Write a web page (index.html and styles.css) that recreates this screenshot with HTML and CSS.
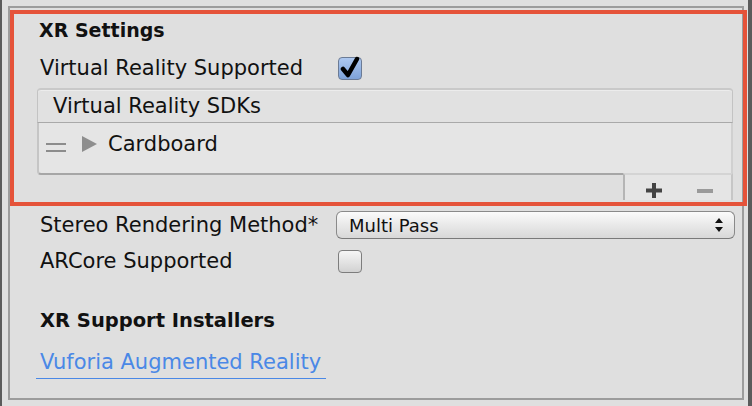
FILE: index.html
```html
<!DOCTYPE html>
<html lang="en">
<head>
    <meta charset="UTF-8">
    <title>Player Settings - XR</title>
    <link rel="stylesheet" href="styles.css">
</head>
<body>
    <div class="frame">
        <div class="panel">
            <section class="xr-box">
                <h2 class="section-title">XR Settings</h2>
                <div class="field">
                    <span class="label">Virtual Reality Supported</span>
                    <span class="check on">
                        <svg width="24" height="24" viewBox="0 0 24 24">
                            <path d="M5 13 L10 19 L19 3" fill="none" stroke="#000" stroke-width="4.5" stroke-linecap="round" stroke-linejoin="round"/>
                        </svg>
                    </span>
                </div>
                <div class="sdk-list">
                    <div class="list-head">Virtual Reality SDKs</div>
                    <div class="list-body">
                        <div class="list-item">
                            <span class="handle"></span>
                            <span class="arrow"></span>
                            <span>Cardboard</span>
                        </div>
                    </div>
                    <div class="list-foot">
                        <span class="btn-plus">
                            <svg width="22" height="24" viewBox="0 0 22 24">
                                <path d="M8 2 V17 M0 9.5 H16" stroke="#444" stroke-width="4"/>
                                <rect x="14" y="19" width="6" height="3" fill="#444"/>
                            </svg>
                        </span>
                        <span class="btn-minus"></span>
                    </div>
                </div>
            </section>

            <div class="field wide">
                <span class="label">Stereo Rendering Method*</span>
                <div class="select">
                    <span>Multi Pass</span>
                    <svg width="8" height="14" viewBox="0 0 8 14">
                        <path d="M4 0 L8 5 H0 Z M0 9 H8 L4 14 Z" fill="#111"/>
                    </svg>
                </div>
            </div>
            <div class="field wide arcore">
                <span class="label">ARCore Supported</span>
                <span class="check"></span>
            </div>

            <h2 class="section-title installers">XR Support Installers</h2>
            <a href="#" class="link">Vuforia Augmented Reality</a>
        </div>
    </div>
</body>
</html>
```

FILE: styles.css
```css
* {
    margin: 0;
    padding: 0;
    box-sizing: border-box;
    font-family: 'DejaVu Sans', Verdana, sans-serif;
}

body {
    background-color: #dfdfdf;
    color: #111;
    font-size: 21px;
}

.frame {
    width: 752px;
    height: 406px;
    border-left: 2px solid #5b5b5b;
    border-right: 4px solid #5b5b5b;
    padding: 6px 4px 0 6px;
}

.panel {
    height: 394px;
    border: 2px solid #9c9c9c;
    padding-top: 2px;
}

/* Cadre orange */
.xr-box {
    border: 4px solid #e5533a;
    margin-right: -5px;
    padding: 0 10px 0 26px;
    height: 196px;
}

.section-title {
    font-size: 19px;
    font-weight: bold;
    line-height: 32px;
}

.xr-box .section-title {
    margin-left: -1px;
}

.field {
    display: flex;
    align-items: center;
    height: 28px;
    margin-top: 8px;
}

.label {
    width: 298px;
    white-space: nowrap;
}

.check {
    width: 24px;
    height: 23px;
    border: 1px solid #7d7d7d;
    border-radius: 4px;
    background: linear-gradient(#f6f6f6, #d2d2d2);
    position: relative;
}

.check.on {
    background: linear-gradient(#adc8f0, #7ea2d8);
    border-color: #6b7b95;
}

.check svg {
    position: absolute;
    left: -1px;
    top: -2px;
}

/* Liste des SDK */
.sdk-list {
    margin: 6px 0 0 -3px;
}

.list-head {
    height: 35px;
    line-height: 33px;
    padding-left: 15px;
    background: #e1e1e1;
    border: 1px solid #c3c3c3;
    border-top: 2px solid #c9c9c9;
    border-bottom: 1px solid #a9a9a9;
    border-radius: 4px 4px 0 0;
    box-shadow: inset 0 1px 0 #ececec;
}

.list-body {
    height: 52px;
    background: #e5e5e5;
    border-left: 2px solid #c5c5c5;
    border-right: 2px solid #d0d0d0;
    border-bottom: 2px solid #a6a6a6;
    border-radius: 0 0 0 4px;
}

.list-item {
    display: flex;
    align-items: center;
    height: 41px;
    padding-left: 7px;
}

.handle {
    width: 20px;
    height: 9px;
    border-top: 2px solid #8c8c8c;
    border-bottom: 2px solid #8c8c8c;
    margin-top: 8px;
}

.arrow {
    width: 0;
    height: 0;
    border-top: 8px solid transparent;
    border-bottom: 8px solid transparent;
    border-left: 15px solid #8e8e8e;
    margin: 0 11px 0 16px;
}

.list-foot {
    width: 110px;
    height: 27px;
    margin-left: auto;
    margin-top: -2px;
    background: #e5e5e5;
    border-left: 2px solid #b5b5b5;
    border-right: 2px solid #c6c6c6;
    border-top: 2px solid #d4d4d4;
    display: flex;
    align-items: flex-start;
    padding: 6px 0 0 21px;
    overflow: hidden;
}

.btn-minus {
    width: 16px;
    height: 4px;
    background: #9a9a9a;
    margin: 8px 0 0 29px;
}

/* Champs du bas */
.field.wide {
    padding-left: 30px;
    margin-top: 4px;
    height: 30px;
}

.field.wide .label {
    width: 296px;
}

.field.arcore {
    margin-top: 7px;
    height: 28px;
}

.field.arcore .check {
    margin-left: 2px;
}

.select {
    width: 399px;
    height: 28px;
    border: 1px solid #8a8a8a;
    border-bottom-color: #7a7a7a;
    border-radius: 6px;
    background: linear-gradient(#fbfbfb, #e9e9e9 50%, #d8d8d8);
    display: flex;
    align-items: center;
    justify-content: space-between;
    padding: 0 11px 0 12px;
    font-size: 18px;
}

.installers {
    font-size: 19.5px;
    margin: 30px 0 0 30px;
}

.link {
    display: inline-block;
    margin: 9px 0 0 26px;
    padding: 0 5px 0 4px;
    line-height: 32px;
    color: #4a88e6;
    text-decoration: none;
    border-bottom: 1px solid #4a88e6;
}
```
